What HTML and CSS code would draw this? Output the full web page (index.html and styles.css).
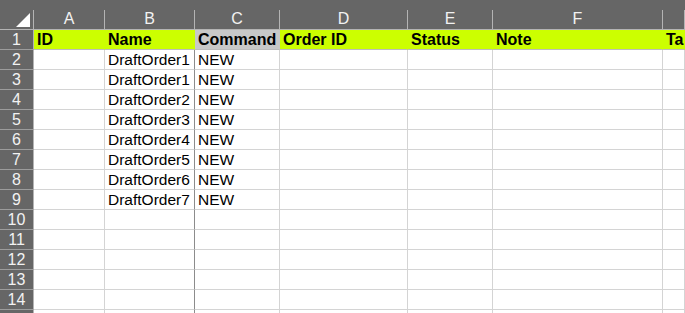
FILE: index.html
```html
<!doctype html>
<html lang="en">
<head>
    <meta charset="UTF-8">
    <title>Sheet1</title>
    <link rel="stylesheet" href="styles.css">
</head>
<body>
<div class="sheet">
    <div class="row head">
        <div class="corner">
            <svg width="14" height="14" viewBox="0 0 14 14"><polygon points="14,0 14,14 0,14" fill="#fff"/></svg>
        </div>
        <div class="col">A</div>
        <div class="col">B</div>
        <div class="col">C</div>
        <div class="col">D</div>
        <div class="col">E</div>
        <div class="col">F</div>
        <div class="col"></div>
    </div>
    <div class="row titles">
        <div class="num">1</div>
        <div class="cell">ID</div>
        <div class="cell freeze">Name</div>
        <div class="cell picked">Command</div>
        <div class="cell">Order ID</div>
        <div class="cell">Status</div>
        <div class="cell">Note</div>
        <div class="cell">Ta</div>
    </div>
    <div class="row"><div class="num">2</div><div class="cell"></div><div class="cell freeze">DraftOrder1</div><div class="cell">NEW</div><div class="cell"></div><div class="cell"></div><div class="cell"></div><div class="cell"></div></div>
    <div class="row"><div class="num">3</div><div class="cell"></div><div class="cell freeze">DraftOrder1</div><div class="cell">NEW</div><div class="cell"></div><div class="cell"></div><div class="cell"></div><div class="cell"></div></div>
    <div class="row"><div class="num">4</div><div class="cell"></div><div class="cell freeze">DraftOrder2</div><div class="cell">NEW</div><div class="cell"></div><div class="cell"></div><div class="cell"></div><div class="cell"></div></div>
    <div class="row"><div class="num">5</div><div class="cell"></div><div class="cell freeze">DraftOrder3</div><div class="cell">NEW</div><div class="cell"></div><div class="cell"></div><div class="cell"></div><div class="cell"></div></div>
    <div class="row"><div class="num">6</div><div class="cell"></div><div class="cell freeze">DraftOrder4</div><div class="cell">NEW</div><div class="cell"></div><div class="cell"></div><div class="cell"></div><div class="cell"></div></div>
    <div class="row"><div class="num">7</div><div class="cell"></div><div class="cell freeze">DraftOrder5</div><div class="cell">NEW</div><div class="cell"></div><div class="cell"></div><div class="cell"></div><div class="cell"></div></div>
    <div class="row"><div class="num">8</div><div class="cell"></div><div class="cell freeze">DraftOrder6</div><div class="cell">NEW</div><div class="cell"></div><div class="cell"></div><div class="cell"></div><div class="cell"></div></div>
    <div class="row"><div class="num">9</div><div class="cell"></div><div class="cell freeze">DraftOrder7</div><div class="cell">NEW</div><div class="cell"></div><div class="cell"></div><div class="cell"></div><div class="cell"></div></div>
    <div class="row"><div class="num">10</div><div class="cell"></div><div class="cell freeze"></div><div class="cell"></div><div class="cell"></div><div class="cell"></div><div class="cell"></div><div class="cell"></div></div>
    <div class="row"><div class="num">11</div><div class="cell"></div><div class="cell freeze"></div><div class="cell"></div><div class="cell"></div><div class="cell"></div><div class="cell"></div><div class="cell"></div></div>
    <div class="row"><div class="num">12</div><div class="cell"></div><div class="cell freeze"></div><div class="cell"></div><div class="cell"></div><div class="cell"></div><div class="cell"></div><div class="cell"></div></div>
    <div class="row"><div class="num">13</div><div class="cell"></div><div class="cell freeze"></div><div class="cell"></div><div class="cell"></div><div class="cell"></div><div class="cell"></div><div class="cell"></div></div>
    <div class="row"><div class="num">14</div><div class="cell"></div><div class="cell freeze"></div><div class="cell"></div><div class="cell"></div><div class="cell"></div><div class="cell"></div><div class="cell"></div></div>
    <div class="row"><div class="num"></div><div class="cell"></div><div class="cell freeze"></div><div class="cell"></div><div class="cell"></div><div class="cell"></div><div class="cell"></div><div class="cell"></div></div>
</div>
</body>
</html>
```
FILE: styles.css
```css
body {
    margin: 0;
    background-color: #fff;
    font-family: "Liberation Sans", Arial, sans-serif;
    overflow: hidden;
}

.sheet {
    width: 685px;
    height: 313px;
    overflow: hidden;
}

.row {
    display: grid;
    grid-template-columns: 34px 71px 90px 85px 128px 85px 170px 1fr;
    height: 20px;
}

/* column letters */
.head {
    height: 30px;
    background-color: #666;
    padding-top: 10px;
    box-sizing: border-box;
}

.corner {
    border-right: 1px solid #b4b4b4;
    border-bottom: 1px solid #b4b4b4;
    display: flex;
    align-items: flex-end;
    justify-content: flex-end;
    padding: 0 3px 2px 0;
}

.corner svg {
    display: block;
}

.col {
    border-right: 1px solid #b4b4b4;
    border-bottom: 1px solid #b4b4b4;
    color: #f2f2f2;
    font-size: 16px;
    line-height: 18px;
    text-align: center;
}

/* row numbers */
.num {
    background-color: #666;
    color: #f2f2f2;
    border-right: 1px solid #b4b4b4;
    border-bottom: 1px solid #9c9c9c;
    font-size: 16px;
    line-height: 19px;
    text-align: center;
}

.cell {
    border-right: 1px solid #d4d4d4;
    border-bottom: 1px solid #d4d4d4;
    padding: 0 3px;
    font-size: 15.5px;
    line-height: 19px;
    color: #000;
    white-space: nowrap;
    overflow: hidden;
}

.cell.freeze {
    border-right-color: #8c8c8c;
}

.titles .cell {
    background-color: #ccff00;
    font-weight: bold;
    font-size: 16px;
    border-right-color: #ccff00;
    border-bottom-color: #bcbcbc;
}

.titles .cell.picked {
    background-color: #c8c8c8;
    border-right-color: #c8c8c8;
}

.titles .cell.freeze {
    border-right-color: #ccff00;
}
```
